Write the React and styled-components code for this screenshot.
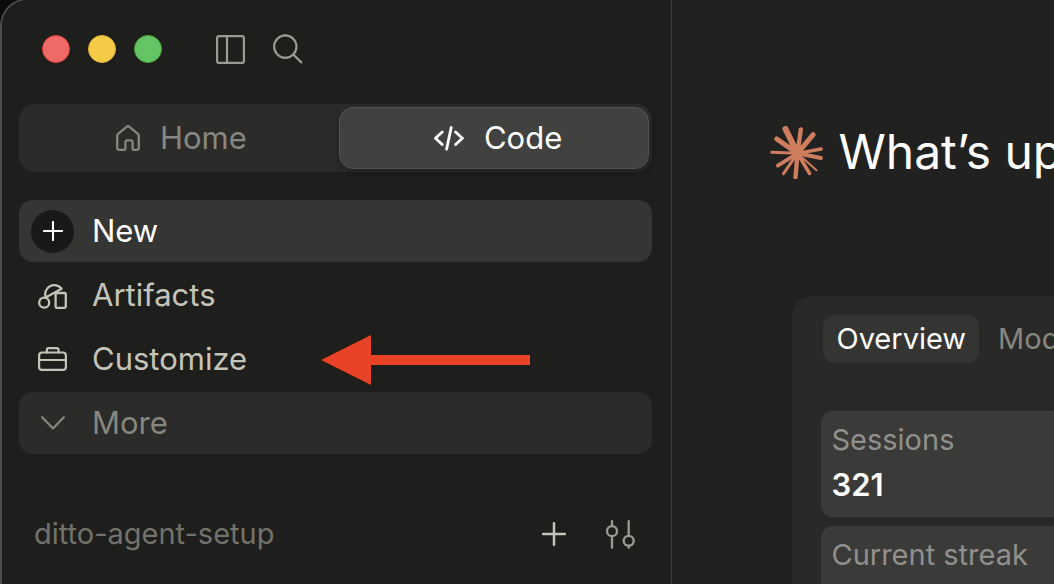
import React from 'react'
import styled, { createGlobalStyle } from 'styled-components'

const white = '#ffffff'
const sand = '#c5c4b9'
const gray = '#87867f'
const dimGray = '#73726b'
const sidebarBg = '#1e1e1c'
const mainBg = '#21211f'
const raised = '#2b2b29'
const hairline = '#3c3b39'
const clay = '#cf7d5f'
const red = '#ea4226'

const GlobalStyle = createGlobalStyle`
  * {
    box-sizing: border-box;
  }

  body {
    margin: 0;
    background: #0b0b0c;
    color: ${white};
    font-family: Inter, 'Liberation Sans', sans-serif;
    font-size: 31px;
    line-height: 36px;
  }

  button {
    border: 0;
    padding: 0;
    background: none;
    color: inherit;
    font: inherit;
    cursor: pointer;
  }
`

const Icon = styled.svg.attrs({ 'aria-hidden': true })`
  display: block;
  flex: none;
  fill: none;
  stroke: currentColor;
  stroke-width: ${props => props.$stroke || 2};
  stroke-linecap: round;
  stroke-linejoin: round;
`

const PanelIcon = () => (
  <Icon width="29" height="29" viewBox="0 0 29 29" $stroke={2.2}>
    <rect x="1.1" y="1.1" width="26.8" height="26.8" rx="2" />
    <path d="M11 1v27" />
  </Icon>
)

const SearchIcon = () => (
  <Icon width="30" height="30" viewBox="0 0 30 30" $stroke={2.2}>
    <circle cx="12.3" cy="12.6" r="11.2" />
    <path d="M20.5 20.7l7.8 7.7" />
  </Icon>
)

const HomeIcon = () => (
  <Icon width="24" height="26" viewBox="0 0 24 26" $stroke={2.3}>
    <path d="M1.2 10.6c0-.6.2-1.1.7-1.5l8.9-7.4a1.8 1.8 0 0 1 2.4 0l8.9 7.4c.5.4.7.9.7 1.5V23a1.8 1.8 0 0 1-1.8 1.8h-3.4a1 1 0 0 1-1-1v-6.4a2 2 0 0 0-2-2h-3.2a2 2 0 0 0-2 2v6.4a1 1 0 0 1-1 1H3A1.8 1.8 0 0 1 1.2 23z" />
  </Icon>
)

const CodeIcon = () => (
  <Icon width="30" height="25" viewBox="0 0 30 25" $stroke={2.8}>
    <path d="M8.2 6l-6.7 6.2 6.7 6.3M17.2 1.5l-4.6 21.6M21.6 6l6.8 6.2-6.8 6.3" />
  </Icon>
)

const PlusIcon = ({ size }) => (
  <Icon width={size} height={size} viewBox="0 0 24 24" $stroke={2.5}>
    <path d="M12 1.2v21.6M1.2 12h21.6" />
  </Icon>
)

const ArtifactsIcon = () => (
  <Icon width="29" height="27" viewBox="0 0 29 27" $stroke={2.3}>
    <circle cx="6.2" cy="20.7" r="5" />
    <path d="M7.6 15.4A9.2 9.2 0 0 1 23.6 6.8z" />
    <rect x="17.6" y="11" width="10.2" height="14.8" rx="1" />
  </Icon>
)

const BriefcaseIcon = () => (
  <Icon width="29" height="24" viewBox="0 0 29 24" $stroke={2.2}>
    <rect x="1.1" y="5.5" width="26.8" height="17.4" rx="3" />
    <path d="M1.1 13h26.8M8.8 5.5V3.1a2 2 0 0 1 2-2h7.8a2 2 0 0 1 2 2v2.4" />
  </Icon>
)

const ChevronIcon = () => (
  <Icon width="24" height="14" viewBox="0 0 24 14" $stroke={2.2}>
    <path d="M1.2 1.2L12 12.4 22.8 1.2" />
  </Icon>
)

const SlidersIcon = () => (
  <Icon width="29" height="29" viewBox="0 0 29 29" $stroke={2.3}>
    <path d="M6 1.2v5M6 16.4v11.4M22.7 1.2v14.5M22.7 26v1.8" />
    <circle cx="6" cy="11.2" r="5" />
    <circle cx="22.7" cy="20.8" r="5" />
  </Icon>
)

// x, y of the ray's end and its thickness
const rays = [
  [106, 57, 18],
  [152, 58, 13],
  [189, 74, 15],
  [213, 117, 10],
  [212, 144, 12],
  [199, 181, 6],
  [178, 190, 11],
  [136, 201, 13],
  [100, 191, 9],
  [83, 167, 11],
  [65, 127, 9],
  [80, 87, 15]
]

const Burst = () => (
  <Icon width="53" height="53" viewBox="60 48 158 159">
    {rays.map(([x, y, width]) => (
      <path key={`${x}-${y}`} d={`M142 130L${x} ${y}`} strokeWidth={width} />
    ))}
    <circle cx="142" cy="129" r="17" fill="currentColor" stroke="none" />
  </Icon>
)

const Window = styled.div`
  display: grid;
  grid-template-columns: minmax(0, 7fr) minmax(0, 4fr);
  height: calc(100vh + 2px);
  margin-top: -2px;
  overflow: hidden;
  border: solid #4e4d4a;
  border-width: 2px 0 0 2px;
  border-radius: 28px 0 0 0;
  background: ${mainBg};
`

const Sidebar = styled.aside`
  padding: 34px 19px 0 17px;
  background: ${sidebarBg};
`

const TitleBar = styled.div`
  display: flex;
  align-items: center;
  gap: 28px;
  height: 30px;
  padding-left: 23px;
  color: #9c9a92;
`

const Lights = styled.div`
  display: flex;
  gap: 18px;
  margin-right: 26px;
`

const Light = styled.button`
  width: 28px;
  height: 28px;
  border: 1px solid ${props => props.$rim};
  border-radius: 50%;
  background: ${props => props.$color};
`

const Switcher = styled.div`
  display: flex;
  gap: 6px;
  height: 68px;
  margin: 40px 0 28px;
  padding: 3px;
  border-radius: 16px;
  background: ${raised};
`

const SwitchButton = styled.button`
  display: flex;
  flex: 1;
  align-items: center;
  justify-content: center;
  gap: 20px;
  padding-left: 8px;
  border: 1px solid transparent;
  border-radius: 14px;
  color: ${gray};

  &[aria-pressed='true'] {
    border-color: #52524f;
    background: #41413f;
    box-shadow: 0 4px 10px rgba(0, 0, 0, 0.25);
    color: ${white};
  }
`

const Nav = styled.nav`
  display: flex;
  flex-direction: column;
  gap: 2px;
`

const NavItem = styled.button`
  position: relative;
  display: flex;
  align-items: center;
  gap: 18px;
  height: 62px;
  padding: 0 12px;
  border-radius: 14px;
  background: ${props => props.$bg || 'none'};
  color: ${props => props.$color || sand};
`

const IconSlot = styled.span`
  display: flex;
  align-items: center;
  justify-content: center;
  width: 43px;
  height: 43px;
  border-radius: 50%;
  background: ${props => (props.$filled ? '#191917' : 'none')};
`

const Pointer = styled.svg`
  position: absolute;
  top: 7px;
  left: 302px;
  fill: ${red};
`

const Project = styled.div`
  display: flex;
  align-items: center;
  gap: 40px;
  margin-top: 62px;
  padding: 0 17px 0 15px;
  color: #9c9a92;
  font-size: 29px;
`

const ProjectName = styled.span`
  flex: 1;
  color: ${dimGray};
`

const IconButton = styled.button`
  color: ${props => props.$color || 'inherit'};
`

const Main = styled.main`
  padding: 120px 0 0 98px;
  overflow: hidden;
  border-left: 1px solid ${hairline};
  white-space: nowrap;
`

const Greeting = styled.h1`
  display: flex;
  align-items: center;
  gap: 15px;
  margin: 0;
  font-size: 48px;
  font-weight: 400;
  line-height: 64px;

  svg {
    color: ${clay};
    stroke-width: initial;
  }
`

const Stats = styled.section`
  display: flex;
  flex-direction: column;
  gap: 9px;
  min-height: 400px;
  margin: 112px 0 0 22px;
  padding: 19px 0 0 29px;
  border-radius: 20px 0 0 0;
  background: #292927;
  font-size: 29px;
`

const Tabs = styled.div`
  display: flex;
  gap: 6px;
  margin: 0 0 39px 2px;
`

const Tab = styled.button`
  height: 48px;
  padding: 0 13px;
  border-radius: 12px;
  color: ${gray};

  &[aria-selected='true'] {
    background: #343432;
    color: ${white};
  }
`

const Card = styled.div`
  height: 106px;
  padding: 11px 10px;
  border-radius: 12px 0 0 12px;
  background: #3a3a38;
`

const CardLabel = styled.div`
  color: #91908c;
`

const CardValue = styled.div`
  margin-top: 9px;
  font-size: 31px;
  font-weight: 600;
`

const App = () => (
  <>
    <GlobalStyle />
    <Window>
      <Sidebar>
        <TitleBar>
          <Lights>
            <Light aria-label="Close" $color="#ee6a68" $rim="#e2413c" />
            <Light aria-label="Minimize" $color="#f4ca46" $rim="#e3b23a" />
            <Light aria-label="Zoom" $color="#65c466" $rim="#48ab3a" />
          </Lights>
          <IconButton aria-label="Toggle sidebar">
            <PanelIcon />
          </IconButton>
          <IconButton aria-label="Search">
            <SearchIcon />
          </IconButton>
        </TitleBar>
        <Switcher>
          <SwitchButton aria-pressed="false">
            <HomeIcon />
            Home
          </SwitchButton>
          <SwitchButton aria-pressed="true">
            <CodeIcon />
            Code
          </SwitchButton>
        </Switcher>
        <Nav>
          <NavItem $bg="#353533" $color={white}>
            <IconSlot $filled>
              <PlusIcon size={20} />
            </IconSlot>
            New
          </NavItem>
          <NavItem>
            <IconSlot>
              <ArtifactsIcon />
            </IconSlot>
            Artifacts
          </NavItem>
          <NavItem>
            <IconSlot>
              <BriefcaseIcon />
            </IconSlot>
            Customize
            <Pointer width="209" height="50" viewBox="0 0 209 50" aria-hidden="true">
              <path d="M0 25L50 0v20h159v10H50v20z" />
            </Pointer>
          </NavItem>
          <NavItem $bg={raised} $color={gray}>
            <IconSlot>
              <ChevronIcon />
            </IconSlot>
            More
          </NavItem>
        </Nav>
        <Project>
          <ProjectName>ditto-agent-setup</ProjectName>
          <IconButton aria-label="Add" $color={sand}>
            <PlusIcon size={24} />
          </IconButton>
          <IconButton aria-label="Filters">
            <SlidersIcon />
          </IconButton>
        </Project>
      </Sidebar>
      <Main>
        <Greeting>
          <Burst />
          What’s up
        </Greeting>
        <Stats>
          <Tabs role="tablist">
            <Tab role="tab" aria-selected="true">
              Overview
            </Tab>
            <Tab role="tab" aria-selected="false">
              Models
            </Tab>
          </Tabs>
          <Card>
            <CardLabel>Sessions</CardLabel>
            <CardValue>321</CardValue>
          </Card>
          <Card>
            <CardLabel>Current streak</CardLabel>
          </Card>
        </Stats>
      </Main>
    </Window>
  </>
)

export default App
